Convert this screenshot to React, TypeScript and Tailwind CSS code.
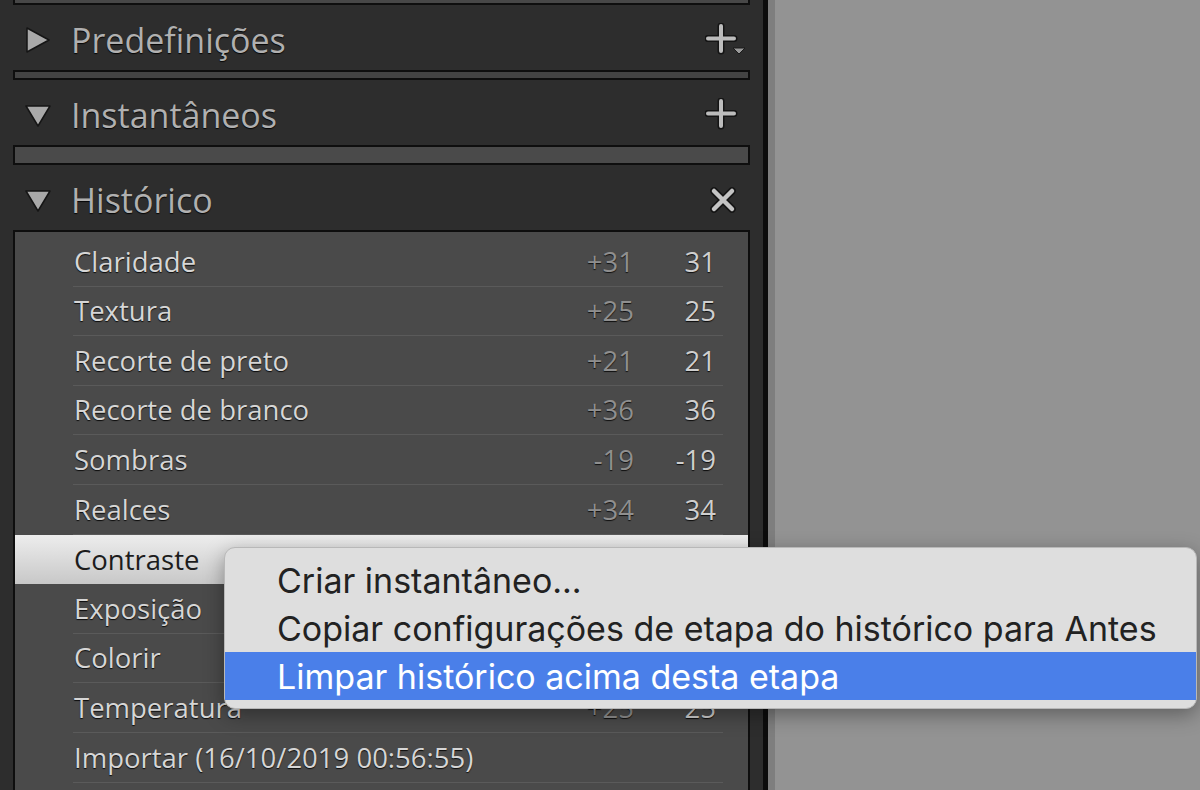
import React from "react";

const panelFont = { fontFamily: '"Open Sans", "Noto Sans", sans-serif' };
const menuFont = { fontFamily: 'Inter, "Noto Sans", sans-serif' };

type Step = { name: string; delta?: string; value?: string };

const steps: Step[] = [
  { name: "Claridade", delta: "+31", value: "31" },
  { name: "Textura", delta: "+25", value: "25" },
  { name: "Recorte de preto", delta: "+21", value: "21" },
  { name: "Recorte de branco", delta: "+36", value: "36" },
  { name: "Sombras", delta: "-19", value: "-19" },
  { name: "Realces", delta: "+34", value: "34" },
  { name: "Contraste", delta: "+12", value: "12" },
  { name: "Exposição", delta: "+0,35", value: "0,35" },
  { name: "Colorir", delta: "+4", value: "4" },
  { name: "Temperatura", delta: "+25", value: "25" },
  { name: "Importar (16/10/2019 00:56:55)" },
];

function Triangle({ open }: { open: boolean }) {
  return (
    <svg width="26" height="26" viewBox="0 0 26 26" className="shrink-0">
      {open ? (
        <path d="M1 4 L25 4 L13 24 Z" fill="#a9a9a9" stroke="#151515" strokeWidth="1.5" strokeLinejoin="round" />
      ) : (
        <path d="M2 1 L24 13 L2 25 Z" fill="#a9a9a9" stroke="#151515" strokeWidth="1.5" strokeLinejoin="round" />
      )}
    </svg>
  );
}

function PlusIcon({ menu }: { menu?: boolean }) {
  return (
    <svg width="40" height="34" viewBox="0 0 40 34">
      <path d="M16 3 V28 M3 15.5 H29" stroke="#141414" strokeWidth="7" strokeLinecap="round" />
      <path d="M16 3 V28 M3 15.5 H29" stroke="#bcbcbc" strokeWidth="4" strokeLinecap="round" />
      {menu && <path d="M28 25 L40 25 L34 31 Z" fill="#9a9a9a" stroke="#1a1a1a" strokeWidth="1" strokeLinejoin="round" />}
    </svg>
  );
}

function CloseIcon() {
  return (
    <svg width="32" height="28" viewBox="0 0 32 28" className="ml-[2px]">
      <path d="M7 5 L25 23 M25 5 L7 23" stroke="#141414" strokeWidth="7.5" strokeLinecap="round" />
      <path d="M7 5 L25 23 M25 5 L7 23" stroke="#c4c4c4" strokeWidth="4.5" strokeLinecap="round" />
    </svg>
  );
}

function Header({ title, open, icon }: { title: string; open: boolean; icon: React.ReactNode }) {
  return (
    <div className="flex h-[65px] items-center pl-[12px] pr-[5px] pt-[4px]">
      <Triangle open={open} />
      <span className="ml-[20px] flex-1 text-[34px] leading-none text-[#b0b0b0] [text-shadow:0_1px_1px_rgba(0,0,0,0.9)]">
        {title}
      </span>
      <div className="flex w-[40px] justify-start">{icon}</div>
    </div>
  );
}

function HistoryRow({ step, selected }: { step: Step; selected?: boolean }) {
  return (
    <div
      className={
        selected
          ? "h-[49.6px] bg-gradient-to-b from-[#ededed] to-[#c8c8c8] py-[2px]"
          : "h-[49.6px]"
      }
    >
      <div
        className={
          selected
            ? "ml-[58px] mr-[25px] flex h-full items-center pl-[1px] pr-[7px]"
            : "ml-[58px] mr-[25px] flex h-full items-center border-b border-[#5a5a5a] pl-[1px] pr-[7px]"
        }
      >
        <span
          className={
            selected
              ? "flex-1 text-[27.5px] text-[#1c1c1c]"
              : "flex-1 text-[27.5px] text-[#d6d6d6] [text-shadow:0_1px_1px_rgba(0,0,0,0.85)]"
          }
        >
          {step.name}
        </span>
        {step.delta && (
          <span className="w-[80px] text-right text-[27.5px] text-[#8f8f8f] [text-shadow:0_1px_1px_rgba(0,0,0,0.8)]">
            {step.delta}
          </span>
        )}
        {step.value && (
          <span className="w-[82px] text-right text-[27.5px] text-[#cfcfcf] [text-shadow:0_1px_1px_rgba(0,0,0,0.85)]">
            {step.value}
          </span>
        )}
      </div>
    </div>
  );
}

export default function App() {
  return (
    <div className="relative flex h-[790px] w-[1200px] overflow-hidden" style={panelFont}>
      <div className="flex w-[763px] flex-col bg-[#2d2d2d] px-[13px]">
        <div className="h-[5px] shrink-0 border-x-2 border-b-2 border-[#0e0e0e] bg-[#474747]" />
        <Header title="Predefinições" open={false} icon={<PlusIcon menu />} />
        <div className="h-[10px] shrink-0 border-2 border-[#0e0e0e] bg-[#434343]" />
        <Header title="Instantâneos" open icon={<PlusIcon />} />
        <div className="h-[20px] shrink-0 border-2 border-[#0e0e0e] bg-[#4a4a4a]" />
        <Header title="Histórico" open icon={<CloseIcon />} />
        <div className="flex-1 border-2 border-b-0 border-[#0e0e0e] bg-[#4a4a4a] pt-[5px]">
          {steps.map((s) => (
            <HistoryRow key={s.name} step={s} selected={s.name === "Contraste"} />
          ))}
        </div>
      </div>
      <div className="w-[5px] bg-[#0c0c0c]" />
      <div className="flex-1 border-l-[7px] border-[#7e7e7e] bg-[#939393]" />

      <div
        className="absolute left-[224px] top-[547px] w-[973px] rounded-[11px] border border-[#b8b8b8] bg-[#dedede] py-[8px] shadow-[0_6px_20px_rgba(0,0,0,0.35)]"
        style={menuFont}
      >
        <div className="flex h-[48px] items-center pl-[52px] text-[34px] text-[#222]">Criar instantâneo...</div>
        <div className="flex h-[48px] items-center pl-[52px] text-[34px] text-[#222]">
          Copiar configurações de etapa do histórico para Antes
        </div>
        <div className="flex h-[48px] items-center bg-[#4a7fe9] pl-[52px] text-[34px] text-white">
          Limpar histórico acima desta etapa
        </div>
      </div>
    </div>
  );
}
